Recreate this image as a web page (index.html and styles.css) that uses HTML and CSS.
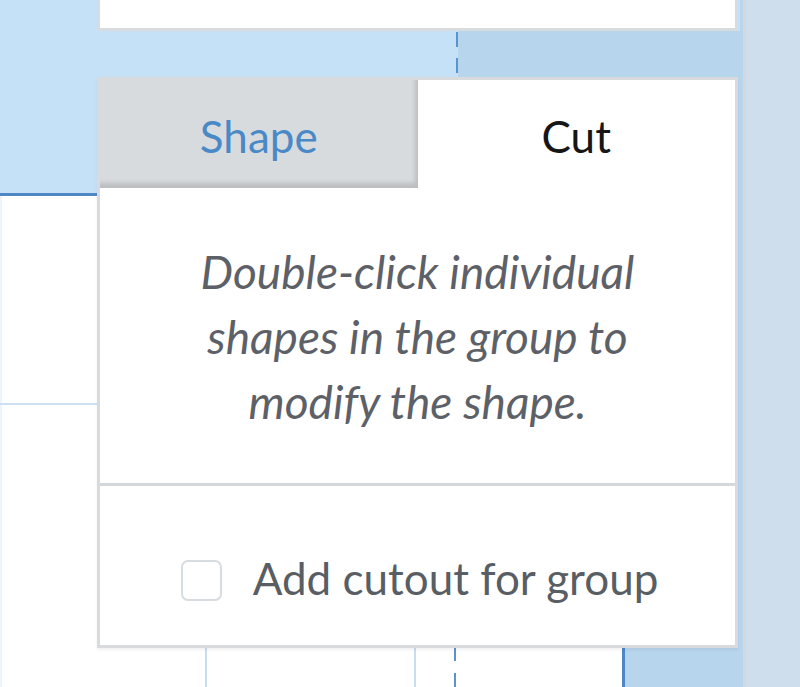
FILE: index.html
```html
<!DOCTYPE html>
<html>
<head>
<meta charset="utf-8">
<link rel="stylesheet" href="styles.css">
</head>
<body>
<div class="stage">
  <div class="col-left">
    <div class="left-top"></div>
    <div class="left-bottom"><div class="left-rule"></div></div>
  </div>
  <div class="col-center">
    <div class="card-row"><div class="card"></div></div>
    <div class="band">
      <div class="band-a"></div>
      <div class="dash"></div>
      <div class="band-b"></div>
    </div>
    <div class="grid-row">
      <div class="cell w110"></div>
      <div class="vline"></div>
      <div class="cell w207"></div>
      <div class="vline"></div>
      <div class="cell w38"></div>
      <div class="dash"></div>
      <div class="cell w166"></div>
      <div class="vline dark"></div>
      <div class="cell fill"></div>
    </div>
  </div>
  <div class="col-right"></div>

  <div class="panel">
    <div class="tabs">
      <div class="tab tab-off">Shape</div>
      <div class="tab tab-on">Cut</div>
    </div>
    <div class="message">
      <p>Double-click individual<br>shapes in the group to<br>modify the shape.</p>
    </div>
    <div class="divider"></div>
    <div class="options">
      <label class="check-row">
        <span class="checkbox"></span>
        <span class="check-label">Add cutout for group</span>
      </label>
    </div>
  </div>
</div>
</body>
</html>
```

FILE: styles.css
```css
html, body {
  margin: 0;
  padding: 0;
}
body {
  width: 800px;
  height: 687px;
  overflow: hidden;
  font-family: Lato, "Open Sans", sans-serif;
  background: #ffffff;
}
.stage {
  position: relative;
  display: flex;
  width: 800px;
  height: 687px;
}

/* left column */
.col-left {
  width: 97px;
  display: flex;
  flex-direction: column;
}
.left-top {
  height: 193px;
  background: #c5e1f8;
  border-bottom: 3px solid #4f86c6;
}
.left-bottom {
  flex: 1;
  background: #ffffff;
  box-shadow: inset 2px 0 0 #eef4fb;
  padding-top: 207px;
}
.left-rule {
  height: 2px;
  background: #cddff2;
}

/* center column */
.col-center {
  width: 643px;
  display: flex;
  flex-direction: column;
}
.card-row {
  height: 31px;
  background: #c5e1f8;
  display: flex;
}
.card {
  width: 635px;
  height: 28px;
  background: #ffffff;
  border: 3px solid #d9dcdf;
  border-top: none;
}
.band {
  height: 46px;
  display: flex;
}
.band-a {
  width: 359px;
  background: #c5e1f8;
}
.band-b {
  flex: 1;
  background: #b8d5ee;
}
.dash {
  width: 2px;
}
.band .dash {
  background: #c5e1f8 repeating-linear-gradient(to bottom, transparent 0 1px, #5a93cd 1px 16px, transparent 16px 26px);
}
.grid-row {
  flex: 1;
  display: flex;
  background: #ffffff;
}
.grid-row .dash {
  background: repeating-linear-gradient(to bottom, #ffffff 0 2px, #5a93cd 2px 17px, #ffffff 17px 27px);
}
.cell { height: 100%; }
.w110 { width: 108px; }
.w207 { width: 207px; }
.w38 { width: 38px; }
.w166 { width: 166px; }
.vline {
  width: 2px;
  background: #cadcf0;
}
.vline.dark {
  width: 3px;
  background: #4f86c6;
}
.fill {
  flex: 1;
  background: #b8d5ee;
}

/* right strip */
.col-right {
  flex: 1;
  background: #cfdeed;
  box-shadow: inset 3px 0 0 #b8d5ee, inset 6px 0 0 #d5d8dc;
}

/* popover panel */
.panel {
  position: absolute;
  left: 97px;
  top: 77px;
  width: 635px;
  height: 565px;
  background: #ffffff;
  border: 3px solid #d8dadd;
  display: flex;
  flex-direction: column;
  box-shadow: 0 2px 3px rgba(0, 0, 0, 0.06);
}
.tabs {
  display: flex;
  height: 108px;
}
.tab {
  flex: 1;
  display: flex;
  align-items: center;
  justify-content: center;
  font-size: 44px;
  line-height: 1.2;
  padding-top: 4px;
  box-sizing: border-box;
}
.tab-off {
  background: #d8dbde;
  color: #4a89c8;
  box-shadow: inset -5px -7px 4px -2px rgba(0, 0, 0, 0.13);
}
.tab-on {
  background: #ffffff;
  color: #161616;
}
.message {
  height: 295px;
  display: flex;
  align-items: center;
  justify-content: center;
}
.message p {
  margin: 0;
  font-style: italic;
  font-size: 46px;
  line-height: 65px;
  color: #5d6167;
  text-align: center;
  padding-top: 2px;
}
.divider {
  height: 3px;
  background: #d5d8db;
}
.options {
  flex: 1;
  display: flex;
  justify-content: center;
  align-items: flex-start;
  padding-top: 68px;
}
.check-row {
  display: flex;
  align-items: center;
  gap: 31px;
  padding-left: 4px;
}
.checkbox {
  width: 37px;
  height: 37px;
  border: 2px solid #d7dce1;
  border-radius: 7px;
  background: #ffffff;
}
.check-label {
  font-size: 44px;
  line-height: 1.2;
  color: #595e64;
  position: relative;
  top: -2px;
}
```
